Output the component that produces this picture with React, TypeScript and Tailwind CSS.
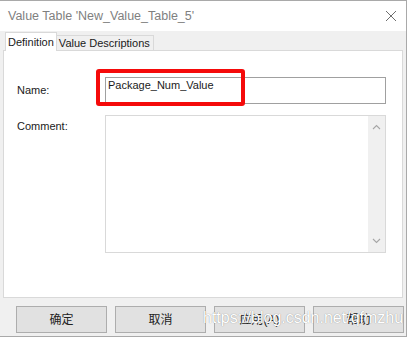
import { useState } from "react";

const ui = { fontFamily: '"Liberation Sans", Arial, sans-serif' };
const cjk = { fontFamily: '"Liberation Sans", "Noto Sans CJK SC", sans-serif' };

function Chevron({ up }: { up?: boolean }) {
  return (
    <svg width="9" height="6" viewBox="0 0 9 6" className="block">
      <path d={up ? "M1 5 L4.5 1.5 L8 5" : "M1 1 L4.5 4.5 L8 1"} fill="none" stroke="#a6a6a6" strokeWidth="1.1" />
    </svg>
  );
}

export default function App() {
  const [name, setName] = useState("Package_Num_Value");
  const [tab, setTab] = useState(0);
  const buttons = ["确定", "取消", "应用(A)", "帮助"];

  return (
    <div className="relative w-[407px] h-[337px] bg-[#f0f0f0] border-t border-r border-b border-[#a9a9a9] flex flex-col" style={ui}>
      {/* title bar */}
      <div className="h-[30px] bg-white flex items-center justify-between pl-[8px] pr-[9px] shrink-0">
        <span className="text-[12.5px] text-[#7f7f7f] leading-none">Value Table 'New_Value_Table_5'</span>
        <svg width="12" height="12" viewBox="0 0 12 12">
          <path d="M1 1 L11 11 M11 1 L1 11" stroke="#6e6e6e" strokeWidth="1" />
        </svg>
      </div>

      {/* tabs */}
      <div className="h-[19px] flex items-end pl-[5px] shrink-0 relative z-10">
        <button
          onClick={() => setTab(0)}
          className="h-[19px] px-[2px] bg-white border-t border-l border-r border-[#d9d9d9] text-[11px] text-[#1a1a1a] leading-none flex items-center -mb-px pt-[1px]"
        >
          Definition
        </button>
        <button
          onClick={() => setTab(1)}
          className="h-[15px] pl-[2px] pr-[3px] bg-[#f0f0f0] border-t border-r border-[#d9d9d9] text-[11px] text-[#1a1a1a] leading-none flex items-center"
        >
          Value Descriptions
        </button>
      </div>

      {/* panel */}
      <div className="mx-[3px] h-[248px] bg-white border border-[#d9d9d9] pt-[26px] pl-[13px] shrink-0">
        {tab === 0 && (
          <>
            <div className="flex items-center">
              <label className="w-[88px] text-[11px] leading-[13px] text-[#1a1a1a]">Name:</label>
              <div className="w-[281px] h-[27px] border border-[#a0a0a0] pt-[1px] pl-[2px]">
                <input
                  value={name}
                  onChange={e => setName(e.target.value)}
                  className="block w-full h-[13px] p-0 text-[11px] leading-[13px] text-[#1a1a1a] outline-none bg-transparent"
                />
              </div>
            </div>
            <div className="flex mt-[11px]">
              <label className="w-[88px] text-[11px] leading-[13px] text-[#1a1a1a] pt-[5px]">Comment:</label>
              <div className="w-[281px] h-[138px] border border-[#d9d9d9] flex">
                <textarea className="flex-1 resize-none outline-none text-[11px]" />
                <div className="w-[17px] bg-[#f0f0f0] flex flex-col items-center justify-between pt-[8px] pb-[8px]">
                  <Chevron up />
                  <Chevron />
                </div>
              </div>
            </div>
          </>
        )}
      </div>

      {/* buttons */}
      <div className="flex gap-[8px] pl-[16px] mt-[8px]">
        {buttons.map(b => (
          <button
            key={b}
            className="w-[91px] h-[27px] bg-[#e1e1e1] border border-[#adadad] text-[12px] text-[#222] flex items-center justify-center"
            style={cjk}
          >
            {b}
          </button>
        ))}
      </div>

      {/* annotation */}
      <div className="absolute left-[96px] top-[68px] w-[149px] h-[37px] border-4 border-[#f50a0a] rounded-[3px] pointer-events-none" />

      {/* watermark */}
      <div
        className="absolute left-[203px] top-[307px] text-[16px] leading-[20px] text-white pointer-events-none whitespace-nowrap"
        style={{ ...ui, textShadow: "0 0 1px rgba(0,0,0,0.45)" }}
      >
        https://blog.csdn.net/qfmzhu
      </div>
    </div>
  );
}
